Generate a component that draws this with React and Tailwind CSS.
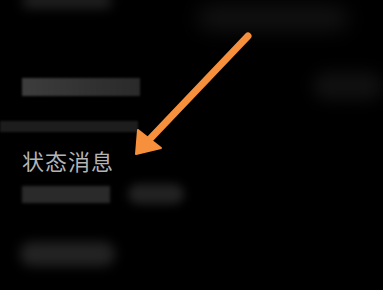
export default function App() {
  return (
    <div className="relative w-[383px] h-[290px] bg-black overflow-hidden flex" style={{ fontFamily: '"Noto Sans CJK SC", "Noto Sans", sans-serif' }}>
      {/* left column */}
      <div className="w-[200px] flex flex-col">
        <div className="mt-[-6px] ml-[22px] w-[90px] h-[14px] rounded-full bg-[#222] blur-[6px]" />
        <div className="mt-[70px] ml-[22px] w-[118px] h-[18px] bg-gradient-to-r from-[#3d3d3d] via-[#333] to-[#2a2a2a] blur-[1px]" />
        <div className="mt-[25px] w-[138px] h-[11px] bg-[#1d1d1d] blur-[1px]" />
        <div className="mt-[13px] ml-[22px] text-[22px] leading-[30px] text-[#b4b4b4] tracking-[1px]">状态消息</div>
        <div className="mt-[9px] ml-[22px] flex items-center gap-[18px]">
          <div className="w-[88px] h-[17px] bg-[#2a2a2a] blur-[1.5px]" />
          <div className="w-[56px] h-[20px] rounded-full bg-[#222] blur-[5px]" />
        </div>
        <div className="mt-[38px] ml-[20px] w-[95px] h-[24px] rounded-full bg-[#232323] blur-[6px]" />
      </div>
      {/* right column */}
      <div className="flex-1 flex flex-col">
        <div className="mt-[6px] ml-[10px] w-[150px] h-[24px] rounded-full bg-[#121212] blur-[10px]" />
        <div className="mt-[42px] ml-[125px] w-[70px] h-[28px] rounded-full bg-[#101010] blur-[8px]" />
      </div>
      {/* arrow overlay */}
      <svg className="absolute inset-0" width="383" height="290" viewBox="0 0 383 290">
        <line x1="248" y1="36" x2="148" y2="141" stroke="#f7903c" strokeWidth="7" strokeLinecap="round" />
        <polygon points="136,154 138,130 161,148" fill="#f7903c" strokeLinejoin="round" stroke="#f7903c" strokeWidth="2" />
      </svg>
    </div>
  );
}
